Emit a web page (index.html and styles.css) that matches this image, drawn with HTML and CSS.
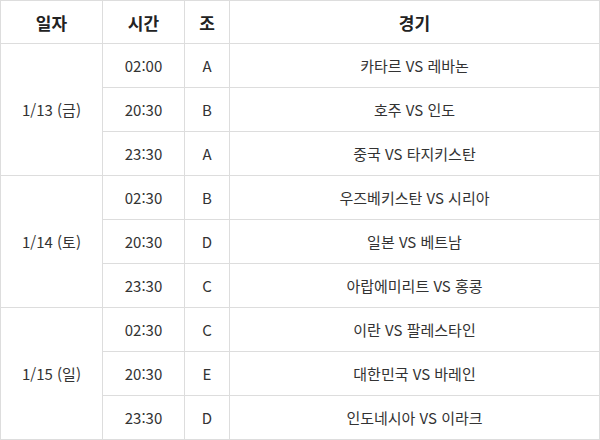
FILE: index.html
```html
<!DOCTYPE html>
<html lang="ko">
<head>
<meta charset="utf-8">
<link rel="stylesheet" href="styles.css">
</head>
<body>
<table class="schedule">
  <colgroup>
    <col class="c-date">
    <col class="c-time">
    <col class="c-group">
    <col class="c-match">
  </colgroup>
  <thead>
    <tr><th>일자</th><th>시간</th><th>조</th><th>경기</th></tr>
  </thead>
  <tbody>
    <tr><td rowspan="3">1/13 (금)</td><td>02:00</td><td>A</td><td>카타르 VS 레바논</td></tr>
    <tr><td>20:30</td><td>B</td><td>호주 VS 인도</td></tr>
    <tr><td>23:30</td><td>A</td><td>중국 VS 타지키스탄</td></tr>
    <tr><td rowspan="3">1/14 (토)</td><td>02:30</td><td>B</td><td>우즈베키스탄 VS 시리아</td></tr>
    <tr><td>20:30</td><td>D</td><td>일본 VS 베트남</td></tr>
    <tr><td>23:30</td><td>C</td><td>아랍에미리트 VS 홍콩</td></tr>
    <tr><td rowspan="3">1/15 (일)</td><td>02:30</td><td>C</td><td>이란 VS 팔레스타인</td></tr>
    <tr><td>20:30</td><td>E</td><td>대한민국 VS 바레인</td></tr>
    <tr><td>23:30</td><td>D</td><td>인도네시아 VS 이라크</td></tr>
  </tbody>
</table>
</body>
</html>
```
FILE: styles.css
```css
html, body {
  margin: 0;
  padding: 0;
  background: #fff;
}
.schedule {
  width: 600px;
  border-collapse: collapse;
  table-layout: fixed;
  font-family: "Noto Sans CJK KR", "Noto Sans", sans-serif;
  color: #333;
}
.c-date { width: 102px; }
.c-time { width: 82px; }
.c-group { width: 45px; }
.schedule th,
.schedule td {
  border: 1px solid #dddddd;
  height: 44px;
  padding: 0;
  text-align: center;
  vertical-align: middle;
  box-sizing: border-box;
}
.schedule th {
  height: 43px;
  font-size: 17px;
  font-weight: bold;
  color: #222;
}
.schedule td {
  font-size: 15px;
}
```
